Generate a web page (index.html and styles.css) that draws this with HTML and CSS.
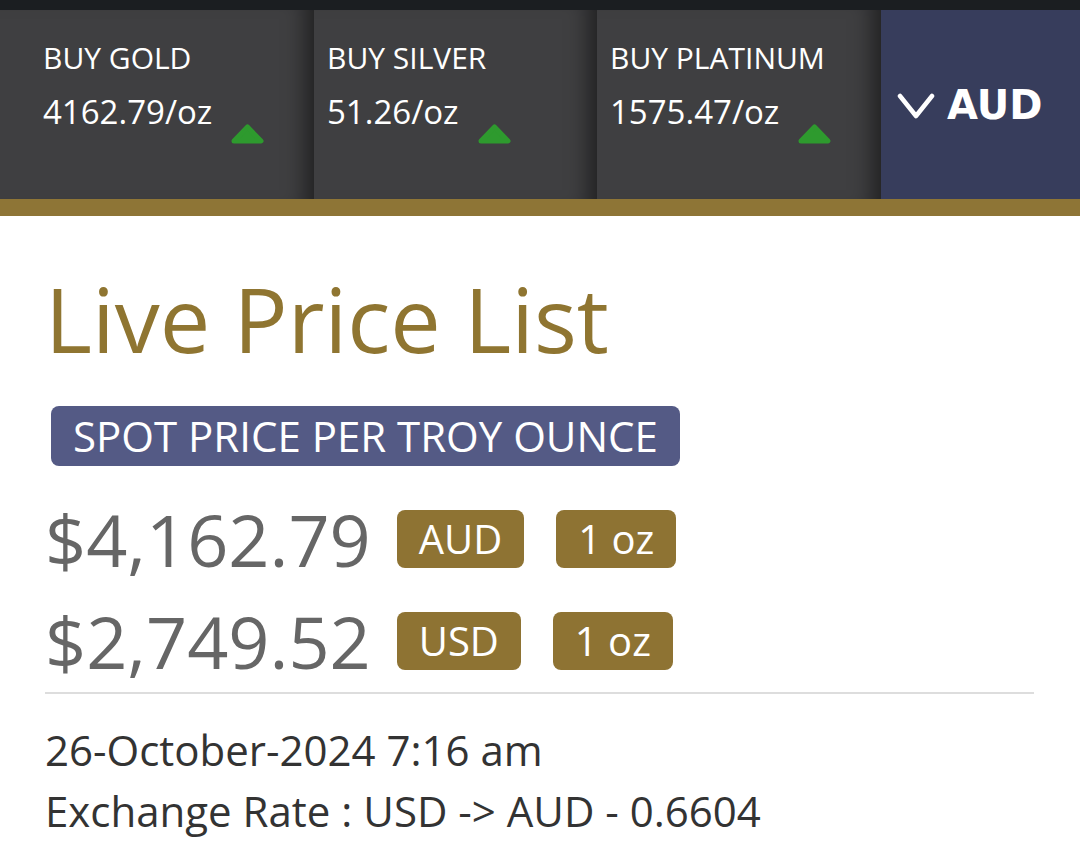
FILE: index.html
```html
<!DOCTYPE html>
<html lang="en">
<head>
    <meta charset="UTF-8">
    <title>Live Price List</title>
    <link rel="stylesheet" href="styles.css">
</head>
<body>
    <div class="topstrip"></div>
    <div class="ticker">
        <div class="tab tab-gold">
            <div class="tab-label">BUY GOLD</div>
            <div class="tab-price">4162.79/oz <svg class="up" width="35" height="21" viewBox="0 0 35 21"><polygon points="4,18 17.5,4 31,18" fill="#2e9a2e" stroke="#2e9a2e" stroke-width="5" stroke-linejoin="round"/></svg></div>
        </div>
        <div class="tab">
            <div class="tab-label">BUY SILVER</div>
            <div class="tab-price">51.26/oz <svg class="up" width="35" height="21" viewBox="0 0 35 21"><polygon points="4,18 17.5,4 31,18" fill="#2e9a2e" stroke="#2e9a2e" stroke-width="5" stroke-linejoin="round"/></svg></div>
        </div>
        <div class="tab tab-wide">
            <div class="tab-label">BUY PLATINUM</div>
            <div class="tab-price">1575.47/oz <svg class="up" width="35" height="21" viewBox="0 0 35 21"><polygon points="4,18 17.5,4 31,18" fill="#2e9a2e" stroke="#2e9a2e" stroke-width="5" stroke-linejoin="round"/></svg></div>
        </div>
        <div class="currency">
            <svg class="chev" width="38" height="28" viewBox="0 0 38 28">
                <polyline points="3,4 19,24 35,4" fill="none" stroke="#fff" stroke-width="4.5" stroke-linecap="round" stroke-linejoin="round"/>
            </svg>
            <span>AUD</span>
        </div>
    </div>
    <div class="goldbar"></div>

    <div class="content">
        <h1>Live Price List</h1>
        <div class="pill">SPOT PRICE PER TROY OUNCE</div>

        <div class="price-row">
            <span class="price">$4,162.79</span>
            <span class="badge">AUD</span>
            <span class="badge">1 oz</span>
        </div>
        <div class="price-row">
            <span class="price">$2,749.52</span>
            <span class="badge">USD</span>
            <span class="badge">1 oz</span>
        </div>

        <hr>

        <div class="info first">26-October-2024 7:16 am</div>
        <div class="info">Exchange Rate : USD -&gt; AUD - 0.6604</div>
    </div>
</body>
</html>
```
FILE: styles.css
```css
body { margin: 0; background: #fff; font-family: "Open Sans", Arial, sans-serif; }

.topstrip { height: 10px; background: #1b1e21; }

.ticker { display: flex; height: 189px; }
.tab { flex: 0 0 283px; background: #3f3f41; color: #fff; padding: 28px 0 0 13px; box-sizing: border-box; box-shadow: inset -26px 0 22px -18px rgba(0,0,0,0.5); }
.tab-gold { flex-basis: 314px; padding-left: 43px; }
.tab-wide { flex-basis: 284px; }
.tab-label { font-size: 30px; line-height: 40px; }
.tab-price { font-size: 33px; line-height: 44px; margin-top: 12px; display: flex; align-items: flex-end; }
.up { margin-left: 18px; margin-bottom: -10px; }

.currency { flex: 1; background: #373d5c; color: #fff; display: flex; align-items: center; padding-left: 16px; gap: 12px; }
.currency span { font-family: "DejaVu Sans", sans-serif; font-weight: bold; font-size: 40px; }
.chev { margin-top: 2px; }

.goldbar { height: 17px; background: #8e7536; }

.content { padding: 0 46px 0 45px; }
h1 { font-weight: normal; color: #8f7531; font-size: 90px; line-height: 100px; margin: 52px 0 0 0; }
.pill { display: inline-block; background: #545a85; color: #fff; font-size: 42px; line-height: 60px; padding: 0 22px; border-radius: 8px; margin: 38px 0 0 6px; }

.price-row { display: flex; align-items: center; height: 102px; margin-top: 22px; }
.price-row + .price-row { margin-top: 0; }
.price { color: #666; font-size: 72px; margin-right: 26px; }
.badge { background: #8e7333; color: #fff; font-size: 40px; line-height: 58px; padding: 0 22px; border-radius: 8px; margin-right: 32px; }

hr { border: 0; border-top: 2px solid #ddd; margin: 0; }
.info { color: #333; font-size: 42px; line-height: 61px; }
.first { margin-top: 25px; }
```
